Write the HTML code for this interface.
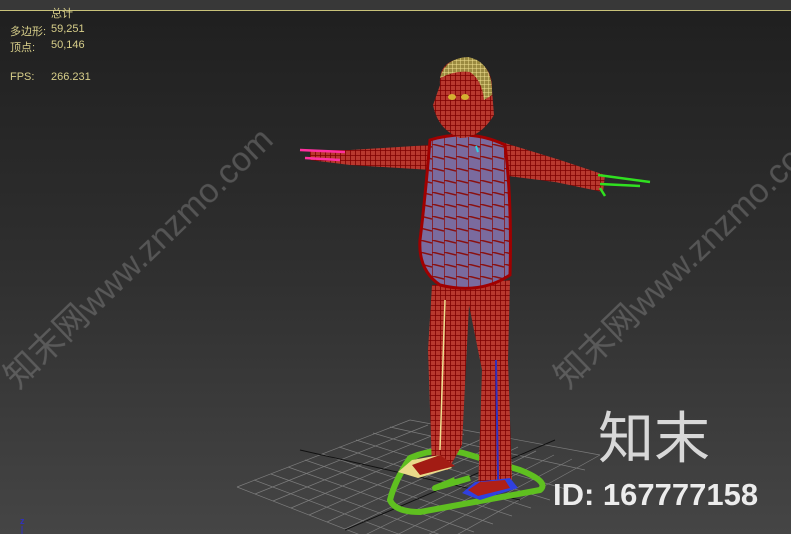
<!DOCTYPE html>
<html><head><meta charset="utf-8"><style>
html,body{margin:0;padding:0;width:791px;height:534px;overflow:hidden;background:#2a2a2a}
.t{position:absolute;font-family:"Liberation Sans","Noto Sans CJK SC",sans-serif;font-size:11px;color:#d8cf8a}
</style></head><body>
<svg width="791" height="534" style="position:absolute;left:0;top:0" xmlns="http://www.w3.org/2000/svg">
<defs>
<linearGradient id="bg" x1="0" y1="0" x2="0" y2="1">
<stop offset="0" stop-color="#1f1f1f"/><stop offset="0.5" stop-color="#2f2f2f"/><stop offset="1" stop-color="#454545"/></linearGradient>
<pattern id="mesh" width="5" height="5" patternUnits="userSpaceOnUse">
<rect width="5" height="5" fill="#b8382e"/><path d="M0 0H5M0 0V5" stroke="#7e0000" stroke-width="1.6"/></pattern>
<pattern id="mesh2" width="12" height="12" patternUnits="userSpaceOnUse">
<rect width="12" height="12" fill="#7a6b9e"/><path d="M0 0L12 3M0 0V12" stroke="#8a1010" stroke-width="1.5"/></pattern>
<pattern id="hair" width="4" height="4" patternUnits="userSpaceOnUse">
<rect width="4" height="4" fill="#9a8a40"/><path d="M0 0H4M0 0V4" stroke="#f0e090" stroke-width="1"/></pattern>
</defs>
<rect width="791" height="534" fill="url(#bg)"/>
<rect width="791" height="10" fill="#383838"/>
<rect y="10" width="791" height="1" fill="#c9c27a"/>
<g stroke="#8a8a8a" stroke-width="0.7" opacity="0.8">
<path d="M237 487L410 420 M255 494L428 425 M273 501L446 430 M291 508L464 434 M309 515L482 439 M327 522L500 443 M345 529L518 447 M363 536L536 451 M381 543L554 455 M399 550L572 459 M417 557L600 455"/>
<path d="M237 487L417 557 M254 480L436 548 M271 474L455 540 M288 467L474 532 M305 460L493 524 M322 454L512 516 M339 447L531 508 M356 440L550 500 M373 433L569 490 M390 427L585 470 M410 420L600 455"/>
</g>
<path d="M300 450L520 500 M345 530L555 440" stroke="#111" stroke-width="1"/>
<path d="M410 458 Q395 480 390 500 Q395 512 420 512 L540 490 Q550 482 520 470 L470 455 Q440 445 410 458Z M455 480L435 488L470 478" fill="none" stroke="#5fbf20" stroke-width="6" stroke-linejoin="round"/>
<path d="M432 285 L470 285 L462 445 L448 470 L432 468 L428 350Z" fill="url(#mesh)"/>
<path d="M465 285 L510 280 L508 360 L512 480 L495 495 L478 492 L482 370Z" fill="url(#mesh)"/>
<path d="M445 300L440 450" stroke="#f0e090" stroke-width="1.5"/>
<path d="M496 360L498 480" stroke="#3030c0" stroke-width="2"/>
<path d="M398 472L412 460L440 455L452 468L418 478Z" fill="#e9d98a"/>
<path d="M412 465L440 455L455 466L420 475Z" fill="#a21c14"/>
<path d="M462 493L475 482L510 478L518 488L480 500Z" fill="#3040e0"/>
<path d="M468 490L480 482L505 480L510 488L478 496Z" fill="#b02018"/>
<path d="M310 150 L350 150 L430 145 L432 170 L350 165 L310 160Z" fill="url(#mesh)"/>
<path d="M495 140 L560 160 L605 175 L603 192 L555 182 L500 175Z" fill="url(#mesh)"/>
<path d="M300 150L345 152M305 158L340 160" stroke="#ff30a0" stroke-width="2.5"/>
<path d="M598 175L650 182M600 184L640 186M600 188L605 196" stroke="#30e020" stroke-width="2.5"/>
<path d="M430 140 Q470 128 505 145 Q512 200 510 275 Q480 295 440 285 Q418 270 420 240 Q425 200 430 140Z" fill="url(#mesh2)"/>
<path d="M430 140 Q470 128 505 145 Q512 200 510 275 Q480 295 440 285 Q418 270 420 240 Q425 200 430 140Z" fill="none" stroke="#a00000" stroke-width="3"/>
<path d="M440 85 Q438 60 465 58 Q493 62 492 90 L494 115 Q480 138 460 138 Q438 130 433 105Z" fill="url(#mesh)"/>
<path d="M440 78 Q445 58 468 57 Q493 62 492 95 L484 100 Q482 80 470 72 Q455 70 440 78Z" fill="url(#hair)"/>
<ellipse cx="452" cy="97" rx="4" ry="3" fill="#d4b030"/>
<ellipse cx="465" cy="97" rx="4" ry="3" fill="#d4b030"/>
<path d="M476 146l2 6" stroke="#30d0e0" stroke-width="2"/>
<g font-family="Liberation Sans,Noto Sans CJK SC,sans-serif" font-size="34" fill="#888" opacity="0.45">
<text x="0" y="0" transform="translate(18,390) rotate(-44)">知末网www.znzmo.com</text>
<text x="0" y="0" transform="translate(568,390) rotate(-44)">知末网www.znzmo.com</text>
</g>
<text x="598" y="458" font-family="Noto Sans CJK SC,sans-serif" font-size="56" fill="#d8d8d8">知末</text>
<text x="553" y="505" font-family="Liberation Sans,sans-serif" font-size="31" font-weight="bold" fill="#ececec">ID: 167777158</text>
<text x="20" y="524" font-family="Liberation Sans,sans-serif" font-size="9" fill="#3030c0" font-weight="bold">z</text>
<path d="M22 526V534" stroke="#3030c0"/>
</svg>
<div class="t" style="left:51px;top:5px">总计</div>
<div class="t" style="left:10px;top:23px">多边形:</div><div class="t" style="left:51px;top:23px">59,251</div>
<div class="t" style="left:10px;top:39px">顶点:</div><div class="t" style="left:51px;top:39px">50,146</div>
<div class="t" style="left:10px;top:71px">FPS:</div><div class="t" style="left:51px;top:71px">266.231</div>
</body></html>
